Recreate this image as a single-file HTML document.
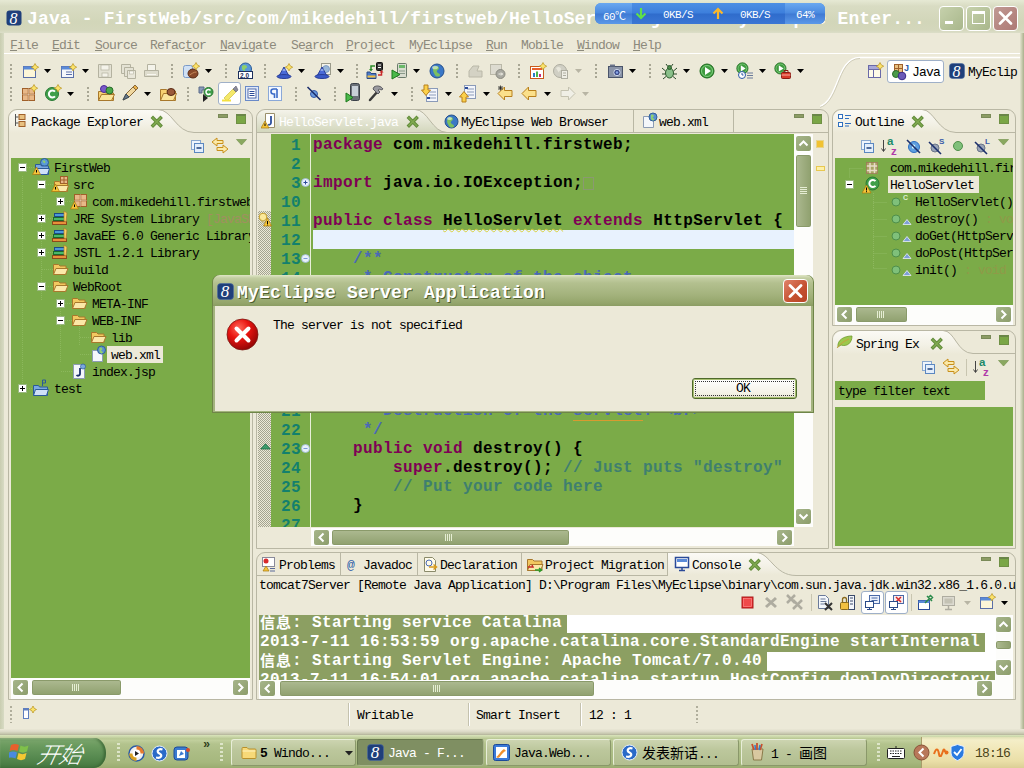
<!DOCTYPE html>
<html lang="zh">
<head>
<meta charset="utf-8">
<title>Java - FirstWeb/src/com/mikedehill/firstweb/HelloServlet.java - MyEclipse Enterprise Workbench</title>
<style>
*{box-sizing:border-box;margin:0;padding:0}
html,body{width:1024px;height:768px;overflow:hidden;background:#ece9d8}
body{position:relative;font-family:"Liberation Mono","Noto Sans CJK SC",monospace;font-size:13px;letter-spacing:-0.8px;color:#000;line-height:16px}
.a{position:absolute}
.t{position:absolute;white-space:pre;height:16px;line-height:18px}
/* title bar */
#title{left:0;top:0;width:1024px;height:33px;background:linear-gradient(#e6e9d4 0,#d9dcc3 6px,#d2d6b9 22px,#d4d7bc 30px,#dcdec8 33px)}
#title .txt{left:27px;top:7px;height:24px;line-height:24px;font-size:18px;font-weight:bold;letter-spacing:0.15px;color:#fff}
.wb{top:6px;width:25px;height:25px;border:1px solid #fff;border-radius:4px}
/* menu */
#menu{left:4px;top:33px;width:1016px;height:21px;background:#ece9d8;border-bottom:1px solid #fff}
#menu span{position:absolute;top:4px;line-height:18px;color:#8c8a7c;white-space:pre}
#menu u{text-decoration:underline}
/* panels */
.panel{border:1px solid #b9b7a4;border-radius:9px 9px 0 0;background:#ece9d8}
.green{background:#7bab48}
.sb{background:#fdfdfb}
.sbbtn{width:17px;height:17px;border:1px solid #fff;border-radius:3px;background:linear-gradient(135deg,#a6b58a,#8c9d6b)}
.thumb{border:1px solid #fff;border-radius:3px;background:linear-gradient(#adba91,#8fa06e);box-shadow:inset 0 0 0 1px #8a9a6a}
.thumbv{border:1px solid #fff;border-radius:3px;background:linear-gradient(90deg,#adba91,#8fa06e);box-shadow:inset 0 0 0 1px #8a9a6a}
.row{position:absolute;white-space:pre;height:17px;line-height:19px}
/* code */
.code{position:absolute;white-space:pre;font-size:16px;font-weight:bold;letter-spacing:0.4px;height:19px;line-height:19px}
.ln{color:#13806d;text-align:right;width:30px;left:271px;padding-top:1px}
.kw{color:#7f0055}.cm{color:#4a68b8}.lc{color:#3f7f6f}
.con{position:absolute;white-space:pre;font-size:16px;font-weight:bold;letter-spacing:0.4px;height:19px;line-height:19px;color:#fff;background:#8c9f62;left:259px;padding-left:1px;overflow:hidden}
.mn{width:10px;height:4px;background:#8c9c64;border:1px solid #7a8a58}
.mx{width:10px;height:10px;background:#7aa646;border:1px solid #6f9044;border-top:2px solid #6a8648}
.cj{font-family:"Noto Sans CJK SC",sans-serif;font-size:15px;letter-spacing:1px;display:inline-block;width:32px;height:19px;line-height:19px;vertical-align:top;overflow:hidden;position:relative;top:-2px}
.tb{top:739px;height:27px;border:1px solid #e8eed8;border-right-color:#8a986a;border-bottom-color:#8a986a;border-radius:3px;background:linear-gradient(#ccd4b0,#bcc79c 40%,#b2be90)}
.tb.on{background:#7f8f62;border-color:#6a7a50 #a8b48a #a8b48a #6a7a50}
.w{color:#fff;font-size:11px;letter-spacing:-0.6px}
</style>
</head>
<body>
<svg width="0" height="0" style="position:absolute"><defs><linearGradient id="tabg" x1="0" y1="0" x2="0" y2="1"><stop offset="0" stop-color="#fbfaf5"/><stop offset=".6" stop-color="#f3f1e6"/><stop offset="1" stop-color="#ece9d8"/></linearGradient></defs></svg>
<!-- TITLE BAR -->
<div id="title" class="a">
  <svg class="a" style="left:6px;top:10px" width="16" height="16" viewBox="0 0 16 16"><rect x="0.5" y="0.5" width="15" height="15" rx="3" fill="#1f3f7a"/><text x="3.500" y="13.500" font-family="Liberation Serif,serif" font-style="italic" font-size="16" fill="#fff" letter-spacing="0">8</text></svg>
  <div class="t txt">Java - FirstWeb/src/com/mikedehill/firstweb/HelloServlet.java - MyEclipse Enter...</div>
</div>
<!-- title widgets -->
<div class="a" style="left:595px;top:3px;width:230px;height:21px;border-radius:6px;background:linear-gradient(#4d8fe4 0,#3d7fdc 10px,#2f6ccc 11px,#3a76d4 21px);overflow:hidden">
 <div class="a" style="left:0;top:0;width:37px;height:21px;background:linear-gradient(#6aa8f0,#4a8ae0 10px,#3f7ad4 11px,#5a98e8)"></div>
 <div class="a" style="left:190px;top:0;width:40px;height:21px;background:linear-gradient(#6aa8f0,#4a8ae0 10px,#3f7ad4 11px,#5a98e8)"></div>
</div>
<div class="t w" style="left:603px;top:6px">60<span style="font-family:'Noto Sans CJK SC',sans-serif;letter-spacing:0">℃</span></div>
<svg class="a" style="left:635px;top:7px" width="12" height="13" viewBox="0 0 12 13"><path d="M6 1v9M1.500 6.500L6 11l4.500-4.500" fill="none" stroke="#5fe04a" stroke-width="2.200"/></svg>
<div class="t w" style="left:663px;top:6px">0KB/S</div>
<svg class="a" style="left:712px;top:7px" width="12" height="13" viewBox="0 0 12 13"><path d="M6 12V3M1.500 6.500L6 2l4.500 4.500" fill="none" stroke="#fbb82a" stroke-width="2.200"/></svg>
<div class="t w" style="left:740px;top:6px">0KB/S</div>
<div class="t w" style="left:796px;top:6px">64%</div>
<div class="a wb" style="left:939px;background:linear-gradient(135deg,#c6d1ac,#b4c198 60%,#a9b78c)"></div>
<div class="a" style="left:945px;top:21px;width:8px;height:3px;background:#fff"></div>
<div class="a wb" style="left:966px;background:linear-gradient(135deg,#c6d1ac,#b4c198 60%,#a9b78c)"></div>
<div class="a" style="left:972px;top:11px;width:13px;height:13px;border:1px solid #fff;border-top-width:3px"></div>
<div class="a wb" style="left:993px;background:linear-gradient(135deg,#c09a94,#b58580 60%,#ac7a76)"></div>
<svg class="a" style="left:998px;top:11px" width="15" height="14" viewBox="0 0 15 14"><path d="M2 1.500l11 11M13 1.500l-11 11" stroke="#fff" stroke-width="2.600" stroke-linecap="round"/></svg>
<!-- MENU -->
<div id="menu" class="a">
  <span style="left:6px"><u>F</u>ile</span><span style="left:48px"><u>E</u>dit</span><span style="left:91px"><u>S</u>ource</span><span style="left:146px">Refac<u>t</u>or</span><span style="left:216px"><u>N</u>avigate</span><span style="left:287px">Se<u>a</u>rch</span><span style="left:342px"><u>P</u>roject</span><span style="left:405px">MyEclipse</span><span style="left:482px"><u>R</u>un</span><span style="left:517px">Mobile</span><span style="left:573px"><u>W</u>indow</span><span style="left:629px"><u>H</u>elp</span>
</div>
<!--TOOLBAR-->
<div class="a" style="left:10px;top:64px;width:2px;height:15px;background:repeating-linear-gradient(#a8a694 0 2px,transparent 2px 4px)"></div>
<svg class="a" style="left:22px;top:63px" width="18" height="17" viewBox="0 0 18 17"><rect x="1.500" y="3.500" width="12" height="11" fill="#fdf6d8" stroke="#5a6fa8"/><rect x="1.500" y="3.500" width="12" height="3" fill="#5a8ad8"/><path d="M13 0.5l1.300 2.400 2.400 1.300-2.400 1.300L13 7.9l-1.300-2.400-2.400-1.300 2.400-1.300z" fill="#fbe36a" stroke="#b8901c" stroke-width=".7"/></svg>
<svg class="a" style="left:44px;top:69px" width="7" height="4" viewBox="0 0 7 4"><path d="M0 0h7L3.500 4z" fill="#000"/></svg>
<svg class="a" style="left:60px;top:63px" width="18" height="17" viewBox="0 0 18 17"><rect x="1.500" y="3.500" width="12" height="11" fill="#f4f6fb" stroke="#5a6fa8"/><rect x="1.500" y="3.500" width="12" height="3" fill="#5a8ad8"/><path d="M6 9h6M6 11.500h6" stroke="#5a6fa8"/><path d="M13 0.5l1.300 2.400 2.400 1.300-2.400 1.300L13 7.9l-1.300-2.400-2.400-1.300 2.400-1.300z" fill="#fbe36a" stroke="#b8901c" stroke-width=".7"/></svg>
<svg class="a" style="left:82px;top:69px" width="7" height="4" viewBox="0 0 7 4"><path d="M0 0h7L3.500 4z" fill="#000"/></svg>
<svg class="a" style="left:97px;top:63px" width="16" height="16" viewBox="0 0 16 16"><path d="M1.500 1.500h13v13h-13z" fill="#e4e2d4" stroke="#b4b2a0"/><rect x="4" y="2" width="8" height="5" fill="#f4f3ea" stroke="#b4b2a0" stroke-width=".7"/><rect x="5" y="10" width="6" height="4" fill="#f4f3ea" stroke="#b4b2a0" stroke-width=".7"/></svg>
<svg class="a" style="left:120px;top:63px" width="17" height="17" viewBox="0 0 17 17"><path d="M1.500 1.500h9v9h-9z" fill="#e4e2d4" stroke="#b4b2a0"/><path d="M4.500 4.500h9v9h-9z" fill="#e4e2d4" stroke="#b4b2a0"/><path d="M7.500 7.500h8v8h-8z" fill="#e9e7da" stroke="#b4b2a0"/><rect x="9.500" y="8" width="4" height="3" fill="#f8f7f0" stroke="#b4b2a0" stroke-width=".6"/></svg>
<svg class="a" style="left:143px;top:63px" width="17" height="16" viewBox="0 0 17 16"><path d="M4.500 1.500h8v6h-8z" fill="#f4f3ea" stroke="#b4b2a0"/><path d="M1.500 7.500h14v6h-14z" fill="#dedccd" stroke="#b4b2a0"/><path d="M4 11.500h9" stroke="#f8f7f0"/></svg>
<div class="a" style="left:171px;top:64px;width:2px;height:15px;background:repeating-linear-gradient(#a8a694 0 2px,transparent 2px 4px)"></div>
<svg class="a" style="left:182px;top:62px" width="19" height="18" viewBox="0 0 19 18"><rect x="1.500" y="3.500" width="9" height="12" rx="2" fill="#cfe0f4" stroke="#7a9ac8"/><ellipse cx="11" cy="11.500" rx="5" ry="4.500" fill="#8a4a2a" stroke="#5a2a14"/><path d="M7.500 13c2-1 4-3 7-3" stroke="#c88a5a" fill="none"/><path d="M14 0.5l1.300 2.400 2.400 1.300-2.400 1.300L14 7.9l-1.300-2.400-2.400-1.300 2.400-1.300z" fill="#fbe36a" stroke="#b8901c" stroke-width=".7"/></svg>
<svg class="a" style="left:205px;top:69px" width="7" height="4" viewBox="0 0 7 4"><path d="M0 0h7L3.500 4z" fill="#000"/></svg>
<div class="a" style="left:225px;top:64px;width:2px;height:15px;background:repeating-linear-gradient(#a8a694 0 2px,transparent 2px 4px)"></div>
<svg class="a" style="left:237px;top:62px" width="17" height="18" viewBox="0 0 17 18"><circle cx="8.500" cy="7" r="6" fill="#5a9ad8" stroke="#2a5a98"/><path d="M5 4c2-2 5-1 5 1s-3 1-2 3-2 1-3-1z" fill="#8fd06a"/><rect x="1.500" y="9.500" width="14" height="7" fill="#fff" stroke="#1c2f5c"/><text x="3" y="15.500" font-family="Liberation Sans,sans-serif" font-size="6.500" font-weight="bold" fill="#1c2f5c" letter-spacing="0">2.0</text></svg>
<div class="a" style="left:264px;top:64px;width:2px;height:15px;background:repeating-linear-gradient(#a8a694 0 2px,transparent 2px 4px)"></div>
<svg class="a" style="left:276px;top:63px" width="18" height="17" viewBox="0 0 18 17"><path d="M8 4l5 9H3z" fill="#4a6ad8" stroke="#2a3f98"/><ellipse cx="8" cy="13.500" rx="7" ry="2" fill="#3a5ac8" stroke="#2a3f98"/><path d="M6.500 7h3" stroke="#cfe0ff"/><path d="M13 0.5l1.300 2.400 2.400 1.300-2.400 1.300L13 7.9l-1.300-2.400-2.400-1.300 2.400-1.300z" fill="#fbe36a" stroke="#b8901c" stroke-width=".7"/></svg>
<svg class="a" style="left:298px;top:69px" width="7" height="4" viewBox="0 0 7 4"><path d="M0 0h7L3.500 4z" fill="#000"/></svg>
<svg class="a" style="left:314px;top:63px" width="18" height="17" viewBox="0 0 18 17"><rect x="7.500" y="0.500" width="9" height="11" fill="#f4f3ea" stroke="#9a9a8a"/><circle cx="12" cy="6" r="3.500" fill="#9ab8d8" stroke="#6a8ab8" stroke-width=".7"/><path d="M8 4l5 9H3z" fill="#4a6ad8" stroke="#2a3f98"/><ellipse cx="8" cy="13.500" rx="7" ry="2" fill="#3a5ac8" stroke="#2a3f98"/><path d="M6.500 7h3" stroke="#cfe0ff"/></svg>
<svg class="a" style="left:337px;top:69px" width="7" height="4" viewBox="0 0 7 4"><path d="M0 0h7L3.500 4z" fill="#000"/></svg>
<div class="a" style="left:356px;top:64px;width:2px;height:15px;background:repeating-linear-gradient(#a8a694 0 2px,transparent 2px 4px)"></div>
<svg class="a" style="left:366px;top:62px" width="18" height="18" viewBox="0 0 18 18"><rect x="10.500" y="0.500" width="6" height="8" rx="1" fill="#333" stroke="#111"/><path d="M12 3h3M12 5.500h3" stroke="#fff"/><path d="M1 10h3l1 1.500h5v5H1z" fill="#4a7ac8" stroke="#2a4a88"/><path d="M1.500 14.500h8" stroke="#f0c040" stroke-width="2"/><path d="M9 4H5v4" fill="none" stroke="#2a8a2a" stroke-width="1.500"/><path d="M3 7l2 2.500L7 7z" fill="#2a8a2a"/><path d="M12 13h3.500V10" fill="none" stroke="#c82a2a" stroke-width="1.500"/><path d="M13.500 10.500l2-2.500 2 2.500z" fill="#c82a2a"/></svg>
<svg class="a" style="left:391px;top:63px" width="17" height="17" viewBox="0 0 17 17"><rect x="6.500" y="0.500" width="9" height="14" rx="1" fill="#d8dccf" stroke="#6a7a6a"/><rect x="8" y="2" width="6" height="3" fill="#6ab86a"/><path d="M8 8h6M8 10.500h6" stroke="#8a9a8a"/><path d="M1 7l8 4.500L1 16z" fill="#4ab84a" stroke="#1c7a1c"/></svg>
<svg class="a" style="left:413px;top:69px" width="7" height="4" viewBox="0 0 7 4"><path d="M0 0h7L3.500 4z" fill="#000"/></svg>
<svg class="a" style="left:429px;top:63px" width="16" height="16" viewBox="0 0 16 16"><circle cx="8" cy="8" r="7" fill="#3a78c8" stroke="#24508c"/><path d="M4 4c2-2 6-1 6 1s-3 2-2 4 3 1 3 3-4 2-5 0-2-3-2-5z" fill="#7cc060"/><ellipse cx="6" cy="4.500" rx="3" ry="1.800" fill="#fff" opacity=".5"/></svg>
<div class="a" style="left:456px;top:64px;width:2px;height:15px;background:repeating-linear-gradient(#a8a694 0 2px,transparent 2px 4px)"></div>
<svg class="a" style="left:467px;top:63px" width="17" height="16" viewBox="0 0 17 16"><path d="M2 8l4-5h6l-2 5h5v6H2z" fill="#d4d2c4" stroke="#bab8a8"/></svg>
<svg class="a" style="left:489px;top:63px" width="18" height="17" viewBox="0 0 18 17"><rect x="1.500" y="1.500" width="11" height="10" fill="#dddbd0" stroke="#bab8a8"/><circle cx="11.500" cy="11" r="4.500" fill="#a8a8a0" stroke="#8a8a80"/><path d="M9.500 11h4M12 9.500l1.500 1.500-1.500 1.500" stroke="#f4f3ea" fill="none"/></svg>
<div class="a" style="left:518px;top:64px;width:2px;height:15px;background:repeating-linear-gradient(#a8a694 0 2px,transparent 2px 4px)"></div>
<svg class="a" style="left:529px;top:62px" width="19" height="18" viewBox="0 0 19 18"><rect x="1.500" y="4.500" width="13" height="12" fill="#fff" stroke="#c85a1c"/><rect x="3" y="6" width="10" height="2" fill="#e8602c"/><rect x="4" y="11" width="2" height="4" fill="#2a7ac8"/><rect x="7" y="9.500" width="2" height="5.500" fill="#4ab84a"/><rect x="10" y="12" width="2" height="3" fill="#c82a7a"/><path d="M14 0.5l1.300 2.400 2.400 1.300-2.400 1.300L14 7.9l-1.300-2.400-2.400-1.300 2.400-1.300z" fill="#fbe36a" stroke="#b8901c" stroke-width=".7"/></svg>
<svg class="a" style="left:552px;top:63px" width="18" height="17" viewBox="0 0 18 17"><circle cx="8" cy="8" r="6.500" fill="#d0cfc4" stroke="#aeada0"/><path d="M4 5c2-2 5-1 5 1s-3 2-2 4z" fill="#e8e7dc"/><rect x="9.500" y="7.500" width="6" height="8" fill="#eeede4" stroke="#aeada0"/><path d="M11 10h3M11 12.500h3" stroke="#aeada0"/></svg>
<svg class="a" style="left:575px;top:69px" width="7" height="4" viewBox="0 0 7 4"><path d="M0 0h7L3.500 4z" fill="#b8b5a4"/></svg>
<div class="a" style="left:595px;top:64px;width:2px;height:15px;background:repeating-linear-gradient(#a8a694 0 2px,transparent 2px 4px)"></div>
<svg class="a" style="left:607px;top:63px" width="17" height="16" viewBox="0 0 17 16"><rect x="1.500" y="3.500" width="14" height="11" fill="#8a94a8" stroke="#4a546a"/><rect x="3" y="1.500" width="5" height="2" fill="#6a748a"/><circle cx="10" cy="9.500" r="3.200" fill="#3a4a8a" stroke="#cfd8ea"/><circle cx="10" cy="9.500" r="1.200" fill="#8aa8e8"/></svg>
<svg class="a" style="left:629px;top:69px" width="7" height="4" viewBox="0 0 7 4"><path d="M0 0h7L3.500 4z" fill="#000"/></svg>
<div class="a" style="left:649px;top:64px;width:2px;height:15px;background:repeating-linear-gradient(#a8a694 0 2px,transparent 2px 4px)"></div>
<svg class="a" style="left:661px;top:63px" width="17" height="17" viewBox="0 0 17 17"><ellipse cx="8.500" cy="10" rx="4" ry="5" fill="#8ac08a" stroke="#2a5a2a"/><circle cx="8.500" cy="4.500" r="2" fill="#4a8a4a" stroke="#2a5a2a"/><path d="M4.500 8L1 5M4.500 11H1M5 13.500l-3 2.500M12.500 8L16 5M12.500 11H16M12 13.500l3 2.500M6.500 3L5 1M10.500 3L12 1" stroke="#2a4a2a" fill="none"/></svg>
<svg class="a" style="left:683px;top:69px" width="7" height="4" viewBox="0 0 7 4"><path d="M0 0h7L3.500 4z" fill="#000"/></svg>
<svg class="a" style="left:699px;top:63px" width="16" height="16" viewBox="0 0 16 16"><circle cx="8" cy="8" r="7" fill="#3f9a3f" stroke="#1c6a1c"/><circle cx="8" cy="8" r="5.500" fill="none" stroke="#7fd07f" stroke-width="1"/><path d="M6 4l6 4-6 4z" fill="#fff"/></svg>
<svg class="a" style="left:721px;top:69px" width="7" height="4" viewBox="0 0 7 4"><path d="M0 0h7L3.500 4z" fill="#000"/></svg>
<svg class="a" style="left:736px;top:62px" width="18" height="18" viewBox="0 0 18 18"><g transform="scale(.8)"><circle cx="8" cy="8" r="7" fill="#3f9a3f" stroke="#1c6a1c"/><circle cx="8" cy="8" r="5.500" fill="none" stroke="#7fd07f" stroke-width="1"/><path d="M6 4l6 4-6 4z" fill="#fff"/></g><circle cx="6" cy="13" r="3.500" fill="#fff" stroke="#2a5aa8"/><path d="M6 11v2h1.500" stroke="#2a5aa8" fill="none"/><path d="M11 11h6M11 13.500h6M11 16h6" stroke="#6a7a9a"/></svg>
<svg class="a" style="left:759px;top:69px" width="7" height="4" viewBox="0 0 7 4"><path d="M0 0h7L3.500 4z" fill="#000"/></svg>
<svg class="a" style="left:774px;top:62px" width="18" height="18" viewBox="0 0 18 18"><g transform="scale(.8)"><circle cx="8" cy="8" r="7" fill="#3f9a3f" stroke="#1c6a1c"/><circle cx="8" cy="8" r="5.500" fill="none" stroke="#7fd07f" stroke-width="1"/><path d="M6 4l6 4-6 4z" fill="#fff"/></g><rect x="7.500" y="10.500" width="9" height="6" rx="1" fill="#d83a2a" stroke="#8a1c14"/><path d="M10 10.500v-2h4v2" fill="none" stroke="#8a1c14"/><path d="M7.500 13h9" stroke="#f8b0a0"/></svg>
<svg class="a" style="left:797px;top:69px" width="7" height="4" viewBox="0 0 7 4"><path d="M0 0h7L3.500 4z" fill="#000"/></svg>
<svg class="a" style="left:820px;top:55px" width="200" height="54" viewBox="0 0 200 54"><path d="M-6 52.500c26 0 20-50 46-50H200" fill="none" stroke="#fff" stroke-width="1.500"/><path d="M-6 53.500c27 0 21-50 46-50" fill="none" stroke="#cfccb8" stroke-width="1"/></svg>
<svg class="a" style="left:867px;top:62px" width="17" height="17" viewBox="0 0 17 17"><rect x="1.500" y="3.500" width="12" height="12" fill="#fffbe8" stroke="#6a6aa8"/><path d="M1.500 7.500h12M6.500 7.500v8" stroke="#6a6aa8"/><rect x="2" y="4" width="11" height="3" fill="#a8a8d8"/><path d="M13 0.5l1.300 2.400 2.400 1.300-2.400 1.300L13 7.9l-1.300-2.400-2.400-1.300 2.400-1.300z" fill="#fbe36a" stroke="#b8901c" stroke-width=".7"/></svg>
<div class="a" style="left:887px;top:60px;width:57px;height:23px;border:1px solid #9fb0c8;border-radius:3px;background:#fff"></div>
<svg class="a" style="left:891px;top:63px" width="19" height="18" viewBox="0 0 19 18"><rect x="3.500" y="1.500" width="8" height="8" fill="#e8c080" stroke="#a0602a"/><path d="M3.500 5.500h8M7.500 1.500v8" stroke="#a0602a"/><circle cx="5" cy="11" r="3.500" fill="#4a9a4a" stroke="#2a6a2a"/><circle cx="11" cy="13" r="3.800" fill="#6a5ab8" stroke="#3a2a88"/><text x="13" y="8" font-family="Liberation Sans,sans-serif" font-size="9" font-weight="bold" fill="#2a5aa8" letter-spacing="0">J</text></svg>
<div class="t" style="left:912px;top:64px">Java</div>
<svg class="a" style="left:949px;top:63px" width="16" height="16" viewBox="0 0 16 16"><rect x="0.500" y="0.500" width="15" height="15" rx="3" fill="#1f3f7a" stroke="#4a6aa0" stroke-width=".6"/><text x="3.500" y="13.500" font-family="Liberation Serif,serif" font-style="italic" font-size="16" fill="#fff" letter-spacing="0">8</text></svg>
<div class="t" style="left:968px;top:64px">MyEclip</div>
<div class="a" style="left:10px;top:87px;width:2px;height:15px;background:repeating-linear-gradient(#a8a694 0 2px,transparent 2px 4px)"></div>
<svg class="a" style="left:21px;top:84px" width="18" height="18" viewBox="0 0 18 18"><rect x="1.500" y="4.500" width="12" height="12" fill="#e8b888" stroke="#a0602a"/><path d="M1.500 10.500h12M7.500 4.500v12" stroke="#a0602a" stroke-width="1.500"/><path d="M1.500 10.500h12M7.500 4.500v12" stroke="#f4e0c8" stroke-width=".5"/><path d="M13 0.5l1.300 2.400 2.400 1.300-2.400 1.300L13 7.9l-1.300-2.400-2.400-1.300 2.400-1.300z" fill="#fbe36a" stroke="#b8901c" stroke-width=".7"/></svg>
<svg class="a" style="left:44px;top:84px" width="18" height="18" viewBox="0 0 18 18"><circle cx="8" cy="10" r="6.500" fill="#3f9f4a" stroke="#2a7a34"/><path d="M11 7.700a3.500 3.500 0 1 0 0 4.600" fill="none" stroke="#fff" stroke-width="2"/><path d="M14 0.5l1.300 2.400 2.400 1.300-2.400 1.300L14 7.9l-1.300-2.400-2.400-1.300 2.400-1.300z" fill="#fbe36a" stroke="#b8901c" stroke-width=".7"/></svg>
<svg class="a" style="left:67px;top:92px" width="7" height="4" viewBox="0 0 7 4"><path d="M0 0h7L3.500 4z" fill="#000"/></svg>
<div class="a" style="left:87px;top:87px;width:2px;height:15px;background:repeating-linear-gradient(#a8a694 0 2px,transparent 2px 4px)"></div>
<svg class="a" style="left:97px;top:84px" width="18" height="18" viewBox="0 0 18 18"><path d="M1.500 7.500h6l1 1.500h8v7.500h-15z" fill="#f7d070" stroke="#a8782c"/><path d="M1.500 16.500l3-6h13l-3 6z" fill="#fbe49a" stroke="#a8782c"/><circle cx="7" cy="5" r="3.500" fill="#7a5ac8" stroke="#4a2a98"/><circle cx="12.500" cy="6.500" r="3.500" fill="#4aa84a" stroke="#2a6a2a"/></svg>
<svg class="a" style="left:121px;top:84px" width="18" height="18" viewBox="0 0 18 18"><path d="M2 16l3-6 7-7 3 3-7 7z" fill="#f0d8a0" stroke="#8a6a3a"/><path d="M12 3l2-2 3 3-2 2z" fill="#e8b04a" stroke="#8a6a3a"/><path d="M2 16l3-6 3 3z" fill="#6a7a8a" stroke="#3a4a5a"/></svg>
<svg class="a" style="left:144px;top:92px" width="7" height="4" viewBox="0 0 7 4"><path d="M0 0h7L3.500 4z" fill="#000"/></svg>
<svg class="a" style="left:159px;top:85px" width="18" height="17" viewBox="0 0 18 17"><path d="M1.500 4.500h6l1 1.500h8v9.500h-15z" fill="#f7d070" stroke="#a8782c"/><path d="M1.500 15.500l3-7h13l-3 7z" fill="#fbe49a" stroke="#a8782c"/><ellipse cx="12" cy="7" rx="4" ry="3.500" fill="#9a5a3a" stroke="#5a2a14"/></svg>
<div class="a" style="left:187px;top:87px;width:2px;height:15px;background:repeating-linear-gradient(#a8a694 0 2px,transparent 2px 4px)"></div>
<svg class="a" style="left:197px;top:85px" width="18" height="17" viewBox="0 0 18 17"><path d="M2 2h5v3H5v3H2z" fill="#8a9ab8" stroke="#5a6a8a"/><circle cx="11.500" cy="7" r="4.500" fill="#3f9f4a" stroke="#2a7a34"/><path d="M13.500 5.500a2.500 2.500 0 1 0 0 3" fill="none" stroke="#fff" stroke-width="1.500"/><path d="M6 9l5 4-5 4z" fill="#222"/></svg>
<div class="a" style="left:218px;top:82px;width:23px;height:23px;border:1px solid #9fb0c8;border-radius:3px;background:#fff"></div>
<svg class="a" style="left:221px;top:85px" width="18" height="17" viewBox="0 0 18 17"><path d="M3 13l9-9 3 3-9 9z" fill="#f4e86a" stroke="#c8b82a" stroke-width=".6"/><path d="M12 4l3-3 2 4-2 2z" fill="#8a8a9a" stroke="#5a5a6a" stroke-width=".6"/><path d="M1 15.500h9" stroke="#f4e040" stroke-width="2"/></svg>
<svg class="a" style="left:244px;top:85px" width="16" height="17" viewBox="0 0 16 17"><rect x="1.500" y="1.500" width="13" height="14" fill="#dfe8f8" stroke="#6a8ac8"/><rect x="4" y="4" width="8" height="9" fill="#fff" stroke="#2a4a98" stroke-width=".8"/><path d="M5.500 6.500h5M5.500 8.500h5M5.500 10.500h5" stroke="#2a4a98"/></svg>
<svg class="a" style="left:267px;top:85px" width="16" height="17" viewBox="0 0 16 17"><rect x="1.500" y="1.500" width="13" height="14" fill="#f4f8ff" stroke="#8aa8d8"/><path d="M10 4H6.500a2.500 2.500 0 0 0 0 5H7.500v4M10 4v9" fill="none" stroke="#3a6ac8" stroke-width="1.600"/></svg>
<div class="a" style="left:295px;top:87px;width:2px;height:15px;background:repeating-linear-gradient(#a8a694 0 2px,transparent 2px 4px)"></div>
<svg class="a" style="left:306px;top:85px" width="17" height="17" viewBox="0 0 17 17"><circle cx="8" cy="9" r="3.500" fill="#6a9ae0" stroke="#3a5aa8"/><path d="M1.500 2l13 13" stroke="#1c2f6c" stroke-width="1.600"/></svg>
<div class="a" style="left:334px;top:87px;width:2px;height:15px;background:repeating-linear-gradient(#a8a694 0 2px,transparent 2px 4px)"></div>
<svg class="a" style="left:345px;top:83px" width="16" height="20" viewBox="0 0 16 20"><rect x="5.500" y="0.500" width="9" height="17" rx="2" fill="#6a7078" stroke="#3a4048"/><rect x="7" y="3" width="6" height="10" fill="#c8d0d8"/><path d="M1 10l7 4.500L1 19z" fill="#4ab84a" stroke="#1c7a1c"/></svg>
<svg class="a" style="left:367px;top:84px" width="19" height="18" viewBox="0 0 19 18"><path d="M3 16l8-9" stroke="#3a3a3a" stroke-width="2.500" stroke-linecap="round"/><path d="M7 3c3-2 7-1 9 2l-2 1c-1-1-2-1-3 0l2 2-2 2-5-5z" fill="#9a9aa0" stroke="#5a5a60"/></svg>
<svg class="a" style="left:391px;top:92px" width="7" height="4" viewBox="0 0 7 4"><path d="M0 0h7L3.500 4z" fill="#000"/></svg>
<div class="a" style="left:411px;top:87px;width:2px;height:15px;background:repeating-linear-gradient(#a8a694 0 2px,transparent 2px 4px)"></div>
<svg class="a" style="left:421px;top:84px" width="18" height="19" viewBox="0 0 18 19"><rect x="5.500" y="4.500" width="11" height="13" fill="#f4f6fb" stroke="#8a9ab8"/><path d="M8 8h7M8 11h7M8 14h7" stroke="#8a9ab8"/><rect x="6" y="13" width="3" height="2" fill="#2a4a98"/><path d="M3 1h4v5h2.500L5 11.500 .5 6H3z" fill="#fbd04a" stroke="#b8801c"/></svg>
<svg class="a" style="left:445px;top:92px" width="7" height="4" viewBox="0 0 7 4"><path d="M0 0h7L3.500 4z" fill="#000"/></svg>
<svg class="a" style="left:459px;top:84px" width="18" height="19" viewBox="0 0 18 19"><rect x="5.500" y="1.500" width="11" height="13" fill="#f4f6fb" stroke="#8a9ab8"/><path d="M8 5h7M8 8h7M8 11h7" stroke="#8a9ab8"/><rect x="6" y="3" width="3" height="2" fill="#2a4a98"/><path d="M3 18h4v-5h2.500L5 7.500 .5 13H3z" fill="#fbd04a" stroke="#b8801c"/></svg>
<svg class="a" style="left:483px;top:92px" width="7" height="4" viewBox="0 0 7 4"><path d="M0 0h7L3.500 4z" fill="#000"/></svg>
<svg class="a" style="left:497px;top:85px" width="17" height="17" viewBox="0 0 17 17"><path d="M1 8.500L7.500 2v3.500H15v6H7.500V15z" fill="#fbe08a" stroke="#b8801c"/><path d="M1 3h5M3.500 .5v5M1.500 1l4 4M5.500 1l-4 4" stroke="#222" stroke-width=".8"/></svg>
<svg class="a" style="left:521px;top:85px" width="17" height="17" viewBox="0 0 17 17"><path d="M1 8.500L7.500 2v3.500H15v6H7.500V15z" fill="#fbe08a" stroke="#b8801c"/></svg>
<svg class="a" style="left:544px;top:92px" width="7" height="4" viewBox="0 0 7 4"><path d="M0 0h7L3.500 4z" fill="#000"/></svg>
<svg class="a" style="left:559px;top:85px" width="17" height="17" viewBox="0 0 17 17"><path d="M16 8.500L9.500 2v3.500H2v6h7.500V15z" fill="#f0efe6" stroke="#c4c2b0"/></svg>
<svg class="a" style="left:582px;top:92px" width="7" height="4" viewBox="0 0 7 4"><path d="M0 0h7L3.500 4z" fill="#b8b5a4"/></svg>
<!--/TOOLBAR-->
<!--PANELS-->
<!-- window borders -->
<div class="a" style="left:0;top:33px;width:4px;height:702px;background:linear-gradient(90deg,#c9cdb0,#d8dbc4)"></div>
<div class="a" style="left:1020px;top:33px;width:4px;height:702px;background:linear-gradient(90deg,#e4e3d0,#cdd0b4 40%,#a9af8c)"></div>
<div class="a" style="left:0;top:729px;width:1024px;height:6px;background:linear-gradient(#eae7d6,#dddbc8 40%,#c8c8b0 75%,#b2b399)"></div>

<!-- PACKAGE EXPLORER -->
<div class="a panel" style="left:8px;top:109px;width:245px;height:591px"></div>
<div class="a green" style="left:11px;top:158px;width:239px;height:520px"></div>
<div class="a sb" style="left:11px;top:678px;width:239px;height:21px"></div>
<div class="a sbbtn" style="left:12px;top:679px"></div>
<div class="a thumb" style="left:31px;top:679px;width:91px;height:17px"></div>
<div class="a sbbtn" style="left:232px;top:679px"></div>
<div id="tree" class="a" style="left:11px;top:158px;width:239px;height:520px;overflow:hidden"><div class="a" style="left:-11px;top:-158px">
<svg class="a" style="left:11px;top:158px" width="120" height="240" viewBox="0 0 120 240"><path d="M11.500 18v212M30.500 35v108M49.500 147v58M68.500 164v24" stroke="#8cb85c" fill="none" stroke-dasharray="1 1"/><path d="M16 9.500h8M35 26.500h8M54 43.500h8M35 60.500h8M35 77.500h8M35 94.500h8M31 111.500h12M35 128.500h8M54 145.500h8M54 162.500h8M69 179.500h12M69 196.500h12M50 213.500h12M16 230.500h8" stroke="#8cb85c" fill="none" stroke-dasharray="1 1"/></svg>
<svg class="a" style="left:18px;top:163px" width="9" height="9" viewBox="0 0 9 9"><rect x="0.500" y="0.500" width="8" height="8" fill="#fff" stroke="#9ab880"/><path d="M2 4.500h5" stroke="#000"/></svg>
<svg class="a" style="left:32px;top:158px" width="18" height="18" viewBox="0 0 18 18"><circle cx="12.500" cy="4.500" r="4" fill="#5a9ad8" stroke="#2a5a98"/><path d="M10.500 3c1-1 3 0 3 1s-2 1-1 2z" fill="#8fd06a"/><path d="M3.500 6.500h5l1 1.500h7v8.500h-13z" fill="#7aa8e0" stroke="#2a5a98"/><path d="M3.500 16.500l2-6h12l-2 6z" fill="#cfe0f8" stroke="#2a5a98"/><path d="M4.5 9l4 7.500h-8z" fill="#f5c43a" stroke="#a8780c" stroke-width=".7"/><path d="M4.5 12v2.500" stroke="#000" stroke-width="1"/></svg>
<svg class="a" style="left:37px;top:180px" width="9" height="9" viewBox="0 0 9 9"><rect x="0.500" y="0.500" width="8" height="8" fill="#fff" stroke="#9ab880"/><path d="M2 4.500h5" stroke="#000"/></svg>
<svg class="a" style="left:51px;top:175px" width="18" height="18" viewBox="0 0 18 18"><path d="M3.500 6.500h5l1 1.500h7v8.500h-13z" fill="#f2c860" stroke="#a8782c"/><path d="M3.500 16.500l2-6h12l-2 6z" fill="#fbe8a8" stroke="#a8782c"/><rect x="9.500" y="1.500" width="7" height="7" fill="#e8b888" stroke="#a0602a"/><path d="M9.500 5h7M13 1.500v7" stroke="#a0602a"/><path d="M4.5 9l4 7.500h-8z" fill="#f5c43a" stroke="#a8780c" stroke-width=".7"/><path d="M4.5 12v2.500" stroke="#000" stroke-width="1"/></svg>
<svg class="a" style="left:56px;top:197px" width="9" height="9" viewBox="0 0 9 9"><rect x="0.500" y="0.500" width="8" height="8" fill="#fff" stroke="#9ab880"/><path d="M2 4.500h5" stroke="#000"/><path d="M4.500 2v5" stroke="#000"/></svg>
<svg class="a" style="left:70px;top:193px" width="18" height="17" viewBox="0 0 18 17"><rect x="4.500" y="1.500" width="12" height="12" fill="#e8b888" stroke="#a0602a"/><path d="M4.500 7.500h12M10.500 1.500v12" stroke="#a0602a" stroke-width="1.500"/><path d="M4.500 7.500h12M10.500 1.500v12" stroke="#f4e0c8" stroke-width=".5"/><path d="M4.5 8.5l4 7.500h-8z" fill="#f5c43a" stroke="#a8780c" stroke-width=".7"/><path d="M4.5 11.5v2.500" stroke="#000" stroke-width="1"/></svg>
<svg class="a" style="left:37px;top:214px" width="9" height="9" viewBox="0 0 9 9"><rect x="0.500" y="0.500" width="8" height="8" fill="#fff" stroke="#9ab880"/><path d="M2 4.500h5" stroke="#000"/><path d="M4.500 2v5" stroke="#000"/></svg>
<svg class="a" style="left:52px;top:210px" width="17" height="17" viewBox="0 0 17 17"><rect x="2.500" y="3.500" width="11" height="3" fill="#4a9ad8" stroke="#1c4a88"/><rect x="1.500" y="7.500" width="12" height="3" fill="#4ab86a" stroke="#1c6a2a"/><rect x="0.500" y="11.500" width="14" height="3" fill="#e8903a" stroke="#8a4a1c"/><path d="M12 1l3 2-1 9-2-1z" fill="#f7d060" stroke="#a8782c" stroke-width=".7"/></svg>
<svg class="a" style="left:37px;top:231px" width="9" height="9" viewBox="0 0 9 9"><rect x="0.500" y="0.500" width="8" height="8" fill="#fff" stroke="#9ab880"/><path d="M2 4.500h5" stroke="#000"/><path d="M4.500 2v5" stroke="#000"/></svg>
<svg class="a" style="left:52px;top:227px" width="17" height="17" viewBox="0 0 17 17"><rect x="2.500" y="3.500" width="11" height="3" fill="#4a9ad8" stroke="#1c4a88"/><rect x="1.500" y="7.500" width="12" height="3" fill="#4ab86a" stroke="#1c6a2a"/><rect x="0.500" y="11.500" width="14" height="3" fill="#e8903a" stroke="#8a4a1c"/><path d="M12 1l3 2-1 9-2-1z" fill="#f7d060" stroke="#a8782c" stroke-width=".7"/></svg>
<svg class="a" style="left:37px;top:248px" width="9" height="9" viewBox="0 0 9 9"><rect x="0.500" y="0.500" width="8" height="8" fill="#fff" stroke="#9ab880"/><path d="M2 4.500h5" stroke="#000"/><path d="M4.500 2v5" stroke="#000"/></svg>
<svg class="a" style="left:52px;top:244px" width="17" height="17" viewBox="0 0 17 17"><rect x="2.500" y="3.500" width="11" height="3" fill="#4a9ad8" stroke="#1c4a88"/><rect x="1.500" y="7.500" width="12" height="3" fill="#4ab86a" stroke="#1c6a2a"/><rect x="0.500" y="11.500" width="14" height="3" fill="#e8903a" stroke="#8a4a1c"/><path d="M12 1l3 2-1 9-2-1z" fill="#f7d060" stroke="#a8782c" stroke-width=".7"/></svg>
<svg class="a" style="left:52px;top:261px" width="17" height="17" viewBox="0 0 17 17"><path d="M1.500 3.500h5l1.500 1.500h6v8.500h-12.500z" fill="#f2c860" stroke="#a8782c"/><path d="M1.500 13.500l2.500-6h12l-2.500 6z" fill="#fbe8a8" stroke="#a8782c"/></svg>
<svg class="a" style="left:37px;top:282px" width="9" height="9" viewBox="0 0 9 9"><rect x="0.500" y="0.500" width="8" height="8" fill="#fff" stroke="#9ab880"/><path d="M2 4.500h5" stroke="#000"/></svg>
<svg class="a" style="left:52px;top:278px" width="17" height="17" viewBox="0 0 17 17"><path d="M1.500 3.500h5l1.500 1.500h6v8.500h-12.500z" fill="#f2c860" stroke="#a8782c"/><path d="M1.500 13.500l2.500-6h12l-2.500 6z" fill="#fbe8a8" stroke="#a8782c"/></svg>
<svg class="a" style="left:56px;top:299px" width="9" height="9" viewBox="0 0 9 9"><rect x="0.500" y="0.500" width="8" height="8" fill="#fff" stroke="#9ab880"/><path d="M2 4.500h5" stroke="#000"/><path d="M4.500 2v5" stroke="#000"/></svg>
<svg class="a" style="left:71px;top:295px" width="17" height="17" viewBox="0 0 17 17"><path d="M1.500 3.500h5l1.500 1.500h6v8.500h-12.500z" fill="#f2c860" stroke="#a8782c"/><path d="M1.500 13.500l2.500-6h12l-2.500 6z" fill="#fbe8a8" stroke="#a8782c"/></svg>
<svg class="a" style="left:56px;top:316px" width="9" height="9" viewBox="0 0 9 9"><rect x="0.500" y="0.500" width="8" height="8" fill="#fff" stroke="#9ab880"/><path d="M2 4.500h5" stroke="#000"/></svg>
<svg class="a" style="left:71px;top:312px" width="17" height="17" viewBox="0 0 17 17"><path d="M1.500 3.500h5l1.500 1.500h6v8.500h-12.500z" fill="#f2c860" stroke="#a8782c"/><path d="M1.500 13.500l2.500-6h12l-2.500 6z" fill="#fbe8a8" stroke="#a8782c"/></svg>
<svg class="a" style="left:90px;top:329px" width="17" height="17" viewBox="0 0 17 17"><path d="M1.500 3.500h5l1.500 1.500h6v8.500h-12.500z" fill="#f2c860" stroke="#a8782c"/><path d="M1.500 13.500l2.500-6h12l-2.500 6z" fill="#fbe8a8" stroke="#a8782c"/></svg>
<svg class="a" style="left:90px;top:345px" width="17" height="18" viewBox="0 0 17 18"><path d="M2.500 5.500h7l3 3v8h-10z" fill="#f4f7fb" stroke="#8c9cb4"/><circle cx="11.500" cy="5" r="4" fill="#5b8fcf" stroke="#2f5f9c"/><path d="M9.500 3c1-1 3 0 3 1s-2 1-1 2 2 1 1 2-3 0-3-2z" fill="#8fd070"/></svg>
<svg class="a" style="left:71px;top:363px" width="17" height="17" viewBox="0 0 17 17"><path d="M2.500 1.500h8l3 3v11h-11z" fill="#f4f7fb" stroke="#8c9cb4"/><path d="M9 5v6a2 2 0 0 1-3.500 1" fill="none" stroke="#1c2f6c" stroke-width="1.800"/><circle cx="12" cy="3.500" r="2.500" fill="#7aa8e0" stroke="#2a5a98" stroke-width=".7"/></svg>
<svg class="a" style="left:18px;top:384px" width="9" height="9" viewBox="0 0 9 9"><rect x="0.500" y="0.500" width="8" height="8" fill="#fff" stroke="#9ab880"/><path d="M2 4.500h5" stroke="#000"/><path d="M4.500 2v5" stroke="#000"/></svg>
<svg class="a" style="left:32px;top:379px" width="18" height="18" viewBox="0 0 18 18"><path d="M1.500 6.500h5l1 1.500h8v8.500h-14z" fill="#7aa8e0" stroke="#2a5a98"/><path d="M1.500 16.500l2-6h13l-2 6z" fill="#cfe0f8" stroke="#2a5a98"/><path d="M10.500 1v6M10.500 1h3v3h-3" fill="none" stroke="#2a5a98"/></svg>
<div class="row" style="left:54px;top:159px">FirstWeb</div>
<div class="row" style="left:73px;top:176px">src</div>
<div class="row" style="left:92px;top:193px">com.mikedehill.firstweb</div>
<div class="row" style="left:73px;top:210px">JRE System Library <span style="color:#a09060">[JavaSE-1.6]</span></div>
<div class="row" style="left:73px;top:227px">JavaEE 6.0 Generic Library</div>
<div class="row" style="left:73px;top:244px">JSTL 1.2.1 Library</div>
<div class="row" style="left:73px;top:261px">build</div>
<div class="row" style="left:73px;top:278px">WebRoot</div>
<div class="row" style="left:92px;top:295px">META-INF</div>
<div class="row" style="left:92px;top:312px">WEB-INF</div>
<div class="row" style="left:111px;top:329px">lib</div>
<div class="row" style="left:107px;top:346px;width:56px;background:#ece9d8;padding-left:4px">web.xml</div>
<div class="row" style="left:92px;top:363px">index.jsp</div>
<div class="row" style="left:54px;top:380px">test</div>
</div></div>


<!-- EDITOR -->
<div class="a panel" style="left:256px;top:109px;width:573px;height:440px"></div>
<div class="a" style="left:258px;top:134px;width:13px;height:394px;background:#ece9d8"></div>
<div class="a" style="left:258px;top:211px;width:13px;height:316px;background:repeating-conic-gradient(#a4a490 0 25%,#ece9d8 0 50%) 0 0/2px 2px"></div>
<div class="a green" style="left:271px;top:134px;width:523px;height:393px"></div>
<div class="a" style="left:310px;top:134px;width:1px;height:393px;background:#e8efd8"></div>
<div class="a" style="left:313px;top:230px;width:481px;height:19px;background:#e8f2fe"></div>

<!-- editor code -->
<div id="code" class="a" style="left:271px;top:134px;width:523px;height:393px;overflow:hidden"><div class="a" style="left:-271px;top:-133px">
<div class="code ln" style="top:135px">1</div><div class="code" style="left:313px;top:135px"><span class="kw">package</span> com.mikedehill.firstweb;</div>
<div class="code ln" style="top:154px">2</div>
<div class="code ln" style="top:173px">3</div><div class="code" style="left:313px;top:173px"><span class="kw">import</span> java.io.IOException;</div>
<div class="a" style="left:583px;top:176px;width:11px;height:13px;border:1px solid #8a9a70"></div>
<div class="code ln" style="top:192px">10</div>
<div class="code ln" style="top:211px">11</div><div class="code" style="left:313px;top:211px"><span class="kw">public</span> <span class="kw">class</span> <span style="text-decoration:underline wavy #d8d040 1px;text-underline-offset:3px">HelloServlet</span> <span class="kw">extends</span> HttpServlet {</div>
<div class="code ln" style="top:230px">12</div>
<div class="code ln" style="top:249px">13</div><div class="code cm" style="left:313px;top:249px">    /**</div>
<div class="code ln" style="top:268px">14</div><div class="code cm" style="left:313px;top:268px">     * Constructor of the object.</div>
<div class="code ln" style="top:287px">15</div><div class="code cm" style="left:313px;top:287px">     */</div>
<div class="code ln" style="top:306px">16</div><div class="code" style="left:313px;top:306px">    <span class="kw">public</span> HelloServlet() {</div>
<div class="code ln" style="top:325px">17</div><div class="code" style="left:313px;top:325px">        <span class="kw">super</span>();</div>
<div class="code ln" style="top:344px">18</div><div class="code" style="left:313px;top:344px">    }</div>
<div class="code ln" style="top:363px">19</div>
<div class="code ln" style="top:382px">20</div><div class="code cm" style="left:313px;top:382px">    /**</div>
<div class="code ln" style="top:401px">21</div><div class="code cm" style="left:313px;top:401px">     * Destruction of the <span style="border-bottom:1px solid #d89a30">servlet</span>. &lt;br&gt;</div>
<div class="code ln" style="top:420px">22</div><div class="code cm" style="left:313px;top:420px">     */</div>
<div class="code ln" style="top:439px">23</div><div class="code" style="left:313px;top:439px">    <span class="kw">public</span> <span class="kw">void</span> destroy() {</div>
<div class="code ln" style="top:458px">24</div><div class="code" style="left:313px;top:458px">        <span class="kw">super</span>.destroy(); <span class="lc">// Just puts "destroy"</span></div>
<div class="code ln" style="top:477px">25</div><div class="code lc" style="left:313px;top:477px">        // Put your code here</div>
<div class="code ln" style="top:496px">26</div><div class="code" style="left:313px;top:496px">    }</div>
<div class="code ln" style="top:515px">27</div>
</div></div>
<div class="a" style="left:310px;top:134px;width:1px;height:393px;background:#e8efd8"></div>
<div class="a sb" style="left:794px;top:134px;width:19px;height:393px"></div>
<div class="a" style="left:813px;top:134px;width:14px;height:393px;background:#ece9d8"></div>
<div class="a sb" style="left:311px;top:528px;width:483px;height:18px"></div>

<svg class="a" style="left:301px;top:178px" width="9" height="9" viewBox="0 0 9 9"><circle cx="4.500" cy="4.500" r="4" fill="#e8f0fb" stroke="#9ab8d8" stroke-width=".8"/><path d="M2.500 4.500h4M4.500 2.500v4" stroke="#2a4a98"/></svg>
<svg class="a" style="left:301px;top:254px" width="9" height="9" viewBox="0 0 9 9"><circle cx="4.500" cy="4.500" r="4" fill="#e8f0fb" stroke="#9ab8d8" stroke-width=".8"/><path d="M2.500 4.500h4" stroke="#7a9ad8"/></svg>
<svg class="a" style="left:301px;top:444px" width="9" height="9" viewBox="0 0 9 9"><circle cx="4.500" cy="4.500" r="4" fill="#e8f0fb" stroke="#9ab8d8" stroke-width=".8"/><path d="M2.500 4.500h4" stroke="#7a9ad8"/></svg>
<svg class="a" style="left:258px;top:212px" width="14" height="16" viewBox="0 0 14 16"><circle cx="5" cy="5" r="3.800" fill="#fbe89a" stroke="#c8a02c"/><path d="M3.500 8.500h3v2h-3z" fill="#c8b878"/><path d="M9.500 6l4 8h-8z" fill="#f5c43a" stroke="#a8780c" stroke-width=".7"/><path d="M9.500 9v3M9.500 12.600v.8" stroke="#000" stroke-width="1"/></svg>
<svg class="a" style="left:260px;top:443px" width="11" height="7" viewBox="0 0 11 7"><path d="M5.500 .8L10.300 6H.7z" fill="#3a9a6a" stroke="#1c6a44" stroke-width=".8"/></svg>
<!-- OUTLINE -->
<div class="a panel" style="left:832px;top:109px;width:184px;height:217px"></div>
<div class="a green" style="left:835px;top:158px;width:178px;height:147px"></div>
<div class="a sb" style="left:835px;top:305px;width:178px;height:20px"></div>

<!-- SPRING -->
<div class="a panel" style="left:832px;top:330px;width:184px;height:219px"></div>
<div class="a green" style="left:835px;top:381px;width:150px;height:19px"></div>
<div class="a green" style="left:835px;top:407px;width:178px;height:139px"></div>

<!-- CONSOLE -->
<div class="a panel" style="left:256px;top:552px;width:760px;height:148px"></div>
<div class="a sb" style="left:259px;top:615px;width:754px;height:84px"></div>
<!-- tabs: package explorer -->
<svg class="a" style="left:8px;top:109px" width="245" height="26" viewBox="0 0 245 26"><path d="M1 24V10a9 9 0 0 1 9-9H150c14 0 18 22.500 36 22.500H244V24z" fill="url(#tabg)"/><path d="M150 .5c14 0 18 23 36 23H245" fill="none" stroke="#b9b7a4"/></svg>
<div class="t" style="left:31px;top:114px">Package Explorer</div>
<svg class="a" style="left:14px;top:113px" width="14" height="16" viewBox="0 0 14 16"><path d="M1.500 1v12M1.500 4h3M1.500 10h3" stroke="#555" fill="none"/><rect x="5" y="1.500" width="6" height="5" fill="#e8c080" stroke="#a0602a"/><rect x="5" y="8.500" width="6" height="5" fill="#e8c080" stroke="#a0602a"/></svg>
<svg class="a cx" style="left:150px;top:115px" width="13" height="13" viewBox="0 0 13 13"><path d="M3 3l7.500 7.500M10.500 3L3 10.500" stroke="#5f8a38" stroke-width="3.400" stroke-linecap="square"/><path d="M3 3l7.500 7.500M10.500 3L3 10.500" stroke="#7fa850" stroke-width="1.600" stroke-linecap="square"/></svg>
<div class="a mn" style="left:218px;top:114px"></div><div class="a mx" style="left:236px;top:114px"></div>
<!-- pkg toolbar icons -->
<svg class="a" style="left:190px;top:139px" width="16" height="16" viewBox="0 0 16 16"><rect x="1.500" y="1.500" width="9" height="9" fill="#eef4fb" stroke="#8aa8cf"/><rect x="4.500" y="4.500" width="9" height="9" fill="#e3eefb" stroke="#5b87c0"/><path d="M6.500 9h5" stroke="#1c3f7c" stroke-width="1.500"/></svg>
<svg class="a" style="left:211px;top:137px" width="18" height="18" viewBox="0 0 18 18"><path d="M6 1L1 5l5 4V6.500h6v-3H6z" fill="#fbe9a8" stroke="#c8901c"/><path d="M12 8l5 4-5 4v-2.500H6v-3h6z" fill="#fbe9a8" stroke="#c8901c"/></svg>
<svg class="a" style="left:236px;top:139px" width="11" height="7" viewBox="0 0 11 7"><path d="M0.500 .5h10L5.500 6z" fill="#8aa860" stroke="#6f8f48" stroke-width=".6"/></svg>

<!-- tabs: editor -->
<svg class="a" style="left:256px;top:109px" width="573" height="26" viewBox="0 0 573 26"><defs><linearGradient id="tg" x1="0" y1="0" x2="0" y2="1"><stop offset="0" stop-color="#f4f3ea"/><stop offset="1" stop-color="#d3d7bd"/></linearGradient></defs><path d="M1 23V10a9 9 0 0 1 9-9H159c13 0 17 22 32 22H1z" fill="url(#tg)"/><path d="M159 .5c13 0 17 23 32 23H573" fill="none" stroke="#b9b7a4"/><path d="M1 23.500H192" stroke="#b9b7a4"/><path d="M377.500 1V23M477.500 1V23" stroke="#b9b7a4"/></svg>
<div class="t" style="left:279px;top:114px;color:#fff">HelloServlet.java</div>
<svg class="a" style="left:261px;top:113px" width="16" height="16" viewBox="0 0 16 16"><path d="M4.500 .5h9v14h-9z" fill="#fff" stroke="#9a8f6a"/><path d="M10 3v7a2 2 0 0 1-3 1.500" fill="none" stroke="#2b4f9c" stroke-width="1.800"/><path d="M4 8l4 7H0z" fill="#f5c43a" stroke="#a8780c" stroke-width=".7"/><path d="M4 10.500v2.500" stroke="#000" stroke-width="1"/></svg>
<svg class="a cx" style="left:406px;top:115px" width="13" height="13" viewBox="0 0 13 13"><path d="M3 3l7.500 7.500M10.500 3L3 10.500" stroke="#5f8a38" stroke-width="3.400" stroke-linecap="square"/><path d="M3 3l7.500 7.500M10.500 3L3 10.500" stroke="#7fa850" stroke-width="1.600" stroke-linecap="square"/></svg>
<svg class="a globe" style="left:444px;top:114px" width="15" height="15" viewBox="0 0 15 15"><circle cx="7.500" cy="7.500" r="6.500" fill="#3b78c4" stroke="#24508c"/><path d="M4 4c2-2 5-1 5 1s-3 2-2 4 3 1 3 3-4 2-5 0-2-3-2-5z" fill="#7cc060"/><ellipse cx="5.500" cy="4.500" rx="2.500" ry="1.500" fill="#fff" opacity=".55"/></svg>
<div class="t" style="left:461px;top:114px">MyEclipse Web Browser</div>
<svg class="a" style="left:641px;top:112px" width="17" height="17" viewBox="0 0 17 17"><path d="M2.500 4.500h7l3 3v8h-10z" fill="#f4f7fb" stroke="#8c9cb4"/><circle cx="12" cy="5" r="4" fill="#5b8fcf" stroke="#2f5f9c"/><path d="M10 3c1-1 3 0 3 1s-2 1-1 2 2 1 1 2-3 0-3-2z" fill="#8fd070"/></svg>
<div class="t" style="left:659px;top:114px">web.xml</div>
<div class="a mn" style="left:794px;top:114px"></div><div class="a mx" style="left:812px;top:114px"></div>

<!-- tabs: outline -->
<svg class="a" style="left:832px;top:109px" width="184" height="26" viewBox="0 0 184 26"><path d="M1 24V10a9 9 0 0 1 9-9H90c12 0 16 22.500 34 22.500H184V24z" fill="url(#tabg)"/><path d="M90 .5c12 0 16 23 34 23H185" fill="none" stroke="#b9b7a4"/></svg>
<svg class="a" style="left:837px;top:113px" width="15" height="15" viewBox="0 0 15 15"><rect x="1.500" y="1.500" width="4" height="4" fill="#fff" stroke="#2f6fbf"/><rect x="1.500" y="9.500" width="4" height="4" fill="#fff" stroke="#2f6fbf"/><path d="M8 2.500h6M8 5.500h4M8 10.500h6M8 13h4" stroke="#2f6fbf" stroke-width="1.200"/></svg>
<div class="t" style="left:855px;top:114px">Outline</div>
<svg class="a cx" style="left:911px;top:115px" width="13" height="13" viewBox="0 0 13 13"><path d="M3 3l7.500 7.500M10.500 3L3 10.500" stroke="#5f8a38" stroke-width="3.400" stroke-linecap="square"/><path d="M3 3l7.500 7.500M10.500 3L3 10.500" stroke="#7fa850" stroke-width="1.600" stroke-linecap="square"/></svg>
<div class="a mn" style="left:981px;top:114px"></div><div class="a mx" style="left:999px;top:114px"></div>

<!-- tabs: spring -->
<svg class="a" style="left:832px;top:330px" width="184" height="26" viewBox="0 0 184 26"><path d="M1 24V10a9 9 0 0 1 9-9H111c12 0 14 22.500 30 22.500H184V24z" fill="url(#tabg)"/><path d="M111 .5c12 0 14 23 30 23H185" fill="none" stroke="#b9b7a4"/></svg>
<svg class="a" style="left:836px;top:335px" width="17" height="14" viewBox="0 0 17 14"><path d="M2 12C1 5 8 1 16 1c0 7-5 11-11 9z" fill="#9cc84c" stroke="#6f9a2c" stroke-width=".8"/><path d="M1 13c3-4 7-7 12-9" stroke="#c8a040" fill="none"/></svg>
<div class="t" style="left:856px;top:336px">Spring Ex</div>
<svg class="a cx" style="left:930px;top:337px" width="13" height="13" viewBox="0 0 13 13"><path d="M3 3l7.500 7.500M10.500 3L3 10.500" stroke="#5f8a38" stroke-width="3.400" stroke-linecap="square"/><path d="M3 3l7.500 7.500M10.500 3L3 10.500" stroke="#7fa850" stroke-width="1.600" stroke-linecap="square"/></svg>
<div class="a mn" style="left:981px;top:335px"></div><div class="a mx" style="left:999px;top:335px"></div>
<div class="t" style="left:838px;top:383px">type filter text</div>

<!-- tabs: console -->
<svg class="a" style="left:256px;top:552px" width="760" height="26" viewBox="0 0 760 26"><path d="M412 23V1H500c14 0 18 22 40 22z" fill="url(#tabg)"/><path d="M500 .5c14 0 18 23 40 23H761M0 23.500H412" fill="none" stroke="#b9b7a4"/><path d="M84.500 1V23M161.500 1V23M265.500 1V23M411.500 1V23" stroke="#b9b7a4"/></svg>
<div class="t" style="left:279px;top:557px">Problems</div>
<div class="t" style="left:347px;top:557px;color:#2f5fa8">@</div>
<div class="t" style="left:363px;top:557px">Javadoc</div>
<div class="t" style="left:440px;top:557px">Declaration</div>
<div class="t" style="left:545px;top:557px">Project Migration</div>
<div class="t" style="left:692px;top:557px">Console</div>
<svg class="a cx" style="left:748px;top:558px" width="13" height="13" viewBox="0 0 13 13"><path d="M3 3l7.500 7.500M10.500 3L3 10.500" stroke="#5f8a38" stroke-width="3.400" stroke-linecap="square"/><path d="M3 3l7.500 7.500M10.500 3L3 10.500" stroke="#7fa850" stroke-width="1.600" stroke-linecap="square"/></svg>
<div class="a mn" style="left:981px;top:557px"></div><div class="a mx" style="left:999px;top:557px"></div>
<div class="t" style="left:259px;top:577px">tomcat7Server [Remote Java Application] D:\Program Files\MyEclipse\binary\com.sun.java.jdk.win32.x86_1.6.0.u</div>
<!-- editor scrollbars -->
<div class="a sbbtn" style="left:795px;top:135px"><svg width="15" height="15" viewBox="0 0 15 15"><path d="M3.500 9.500l4-4 4 4" fill="none" stroke="#fff" stroke-width="2"/></svg></div>
<div class="a thumbv" style="left:795px;top:154px;width:17px;height:74px"></div>
<div class="a grip" style="left:800px;top:187px;width:7px;height:7px;background:repeating-linear-gradient(#e6eed4 0 1px,transparent 1px 2px)"></div>
<div class="a sbbtn" style="left:795px;top:508px"><svg width="15" height="15" viewBox="0 0 15 15"><path d="M3.500 5.500l4 4 4-4" fill="none" stroke="#fff" stroke-width="2"/></svg></div>
<div class="a" style="left:816px;top:140px;width:8px;height:8px;background:#f1c232;border:1px solid #e8d48a"></div>
<div class="a" style="left:816px;top:166px;width:9px;height:5px;background:#fdf0a8;border:1px solid #e8c850"></div>
<div class="a sbbtn" style="left:313px;top:529px"><svg width="15" height="15" viewBox="0 0 15 15"><path d="M9.500 3.500l-4 4 4 4" fill="none" stroke="#fff" stroke-width="2"/></svg></div>
<div class="a thumb" style="left:331px;top:529px;width:239px;height:17px"></div>
<div class="a grip" style="left:445px;top:534px;width:7px;height:7px;background:repeating-linear-gradient(90deg,#e6eed4 0 1px,transparent 1px 2px)"></div>
<div class="a sbbtn" style="left:776px;top:529px"><svg width="15" height="15" viewBox="0 0 15 15"><path d="M5.500 3.500l4 4-4 4" fill="none" stroke="#fff" stroke-width="2"/></svg></div>
<!-- pkg scrollbar chevrons -->
<div class="a" style="left:13px;top:680px"><svg width="15" height="15" viewBox="0 0 15 15"><path d="M9.500 3.500l-4 4 4 4" fill="none" stroke="#fff" stroke-width="2"/></svg></div>
<div class="a" style="left:233px;top:680px"><svg width="15" height="15" viewBox="0 0 15 15"><path d="M5.500 3.500l4 4-4 4" fill="none" stroke="#fff" stroke-width="2"/></svg></div>
<div class="a grip" style="left:72px;top:684px;width:7px;height:7px;background:repeating-linear-gradient(90deg,#e6eed4 0 1px,transparent 1px 2px)"></div>
<!-- outline scrollbar -->
<div class="a sbbtn" style="left:836px;top:306px"><svg width="15" height="15" viewBox="0 0 15 15"><path d="M9.500 3.500l-4 4 4 4" fill="none" stroke="#fff" stroke-width="2"/></svg></div>
<div class="a thumb" style="left:855px;top:306px;width:53px;height:17px"></div>
<div class="a grip" style="left:877px;top:311px;width:7px;height:7px;background:repeating-linear-gradient(90deg,#e6eed4 0 1px,transparent 1px 2px)"></div>
<div class="a sbbtn" style="left:995px;top:306px"><svg width="15" height="15" viewBox="0 0 15 15"><path d="M5.500 3.500l4 4-4 4" fill="none" stroke="#fff" stroke-width="2"/></svg></div>
<!-- console scrollbars -->
<div class="a sbbtn" style="left:995px;top:616px"><svg width="15" height="15" viewBox="0 0 15 15"><path d="M3.500 9.500l4-4 4 4" fill="none" stroke="#fff" stroke-width="2"/></svg></div>
<div class="a thumbv" style="left:995px;top:640px;width:17px;height:10px"></div>
<div class="a sbbtn" style="left:995px;top:659px"><svg width="15" height="15" viewBox="0 0 15 15"><path d="M3.500 5.500l4 4 4-4" fill="none" stroke="#fff" stroke-width="2"/></svg></div>
<div class="a sbbtn" style="left:259px;top:680px"><svg width="15" height="15" viewBox="0 0 15 15"><path d="M9.500 3.500l-4 4 4 4" fill="none" stroke="#fff" stroke-width="2"/></svg></div>
<div class="a thumb" style="left:279px;top:680px;width:316px;height:17px"></div>
<div class="a grip" style="left:433px;top:685px;width:7px;height:7px;background:repeating-linear-gradient(90deg,#e6eed4 0 1px,transparent 1px 2px)"></div>
<div class="a sbbtn" style="left:976px;top:680px"><svg width="15" height="15" viewBox="0 0 15 15"><path d="M5.500 3.500l4 4-4 4" fill="none" stroke="#fff" stroke-width="2"/></svg></div>
<div id="con" class="a" style="left:259px;top:615px;width:737px;height:65px;overflow:hidden;background:#fff"><div class="a" style="left:-259px;top:-615px">
<div class="con" style="top:614px;width:308px"><span class="cj">信息</span>: Starting service Catalina</div>
<div class="con" style="top:633px;width:726px">2013-7-11 16:53:59 org.apache.catalina.core.StandardEngine startInternal</div>
<div class="con" style="top:652px;width:508px"><span class="cj">信息</span>: Starting Servlet Engine: Apache Tomcat/7.0.40</div>
<div class="con" style="top:671px;width:736px">2013-7-11 16:54:01 org.apache.catalina.startup.HostConfig deployDirectory</div>
</div></div>
<!-- outline toolbar -->
<svg class="a" style="left:860px;top:139px" width="16" height="16" viewBox="0 0 16 16"><rect x="1.500" y="1.500" width="9" height="9" fill="#eef4fb" stroke="#8aa8cf"/><rect x="4.500" y="4.500" width="9" height="9" fill="#e3eefb" stroke="#5b87c0"/><path d="M6.500 9h5" stroke="#1c3f7c" stroke-width="1.500"/></svg>
<svg class="a" style="left:881px;top:137px" width="18" height="18" viewBox="0 0 18 18"><path d="M2.500 3v11M0.500 11.500l2 3 2-3" fill="none" stroke="#444" stroke-width="1"/><text x="6" y="8" font-family="Liberation Sans,sans-serif" font-weight="bold" font-size="11.500" fill="#1c8a6a" letter-spacing="0">a</text><text x="10" y="17.500" font-family="Liberation Sans,sans-serif" font-weight="bold" font-size="11.500" fill="#b03aa8" letter-spacing="0">z</text></svg>
<svg class="a" style="left:905px;top:138px" width="17" height="17" viewBox="0 0 17 17"><circle cx="9" cy="9" r="5.500" fill="#5f9fe0" stroke="#2f6fbf"/><path d="M7 7c2-1 4 0 3 2s-2 2-3 1z" fill="#dff"/><path d="M2 2l13 13" stroke="#1c2f6c" stroke-width="1.600"/></svg>
<svg class="a" style="left:928px;top:137px" width="17" height="18" viewBox="0 0 17 18"><circle cx="7" cy="11" r="4" fill="#9aa4b8" stroke="#6a7488"/><path d="M1 5l12 12" stroke="#1c2f6c" stroke-width="1.600"/><text x="11" y="7" font-family="Liberation Sans,sans-serif" font-weight="bold" font-size="8" fill="#3a5aa8" letter-spacing="0">S</text></svg>
<svg class="a" style="left:952px;top:140px" width="12" height="12" viewBox="0 0 12 12"><circle cx="6" cy="6" r="4.500" fill="#7fc07a" stroke="#4f8f4a"/></svg>
<svg class="a" style="left:974px;top:137px" width="17" height="18" viewBox="0 0 17 18"><circle cx="7" cy="11" r="4" fill="#9aa4b8" stroke="#6a7488"/><path d="M1 5l12 12" stroke="#1c2f6c" stroke-width="1.600"/><text x="11" y="7" font-family="Liberation Sans,sans-serif" font-weight="bold" font-size="8" fill="#3a5aa8" letter-spacing="0">L</text></svg>
<svg class="a" style="left:998px;top:139px" width="11" height="7" viewBox="0 0 11 7"><path d="M0.500 .5h10L5.500 6z" fill="#8aa860" stroke="#6f8f48" stroke-width=".6"/></svg>
<!-- outline tree -->
<div id="otree" class="a" style="left:835px;top:158px;width:178px;height:147px;overflow:hidden"><div class="a" style="left:-835px;top:-158px">
<svg class="a" style="left:848px;top:166px" width="50" height="106" viewBox="0 0 50 106"><path d="M1.500 2.500h14M1.500 2.500v10M25.500 27v75.500M25.500 36.500h14M25.500 53.500h14M25.500 70.500h14M25.500 87.500h14M25.500 102.500h14" stroke="#8fb860" fill="none" stroke-dasharray="1 1"/></svg>
<svg class="a" style="left:865px;top:161px" width="14" height="14" viewBox="0 0 14 14"><rect x="1" y="1" width="12" height="12" fill="#c8a078" opacity=".6"/><path d="M1 5h12M1 9.500h12M5 1v12M9.500 1v12" stroke="#e8dcc8" stroke-width="1.500"/><rect x="1.500" y="1.500" width="11" height="11" fill="none" stroke="#9a7a58" stroke-width=".8"/></svg>
<div class="row" style="left:890px;top:159px">com.mikedehill.firstweb</div>
<div class="a" style="left:845px;top:180px;width:9px;height:9px;background:#fff;border:1px solid #9ab880"></div><div class="a" style="left:847px;top:184px;width:5px;height:1px;background:#000"></div>
<svg class="a" style="left:862px;top:176px" width="18" height="18" viewBox="0 0 18 18"><circle cx="10.500" cy="7.500" r="6.500" fill="#3f9f4a" stroke="#2a7a34"/><path d="M13.500 5.200a3.500 3.500 0 1 0 0 4.600" fill="none" stroke="#fff" stroke-width="2"/><path d="M4.500 9l4.500 8H0z" fill="#f5c43a" stroke="#a8780c" stroke-width=".7"/><path d="M4.500 11.500v3M4.500 15.200v1" stroke="#000" stroke-width="1"/></svg>
<div class="row" style="left:888px;top:176px;width:91px;background:#ece9d8;padding-left:2px">HelloServlet</div>
<svg class="a" style="left:891px;top:193px" width="22" height="17" viewBox="0 0 22 17"><circle cx="5" cy="9" r="4" fill="#7fc07a" stroke="#4f8f4a"/><text x="12" y="7" font-family="Liberation Sans,sans-serif" font-weight="bold" font-size="7" fill="#dff0d0" letter-spacing="0">C</text></svg>
<div class="row" style="left:915px;top:193px">HelloServlet()</div>
<svg class="a mi" style="left:891px;top:210px" width="22" height="17" viewBox="0 0 22 17"><circle cx="5" cy="9" r="4" fill="#7fc07a" stroke="#4f8f4a"/><path d="M12 14.500l4-5 4 5z" fill="#7f9fd8" stroke="#e8eefa" stroke-width=".8"/></svg>
<div class="row" style="left:915px;top:210px">destroy() <span style="color:#8f9a48">: void</span></div>
<svg class="a mi" style="left:891px;top:227px" width="22" height="17" viewBox="0 0 22 17"><circle cx="5" cy="9" r="4" fill="#7fc07a" stroke="#4f8f4a"/><path d="M12 14.500l4-5 4 5z" fill="#7f9fd8" stroke="#e8eefa" stroke-width=".8"/></svg>
<div class="row" style="left:915px;top:227px">doGet(HttpServletRequest, HttpServletResponse)</div>
<svg class="a mi" style="left:891px;top:244px" width="22" height="17" viewBox="0 0 22 17"><circle cx="5" cy="9" r="4" fill="#7fc07a" stroke="#4f8f4a"/><path d="M12 14.500l4-5 4 5z" fill="#7f9fd8" stroke="#e8eefa" stroke-width=".8"/></svg>
<div class="row" style="left:915px;top:244px">doPost(HttpServletRequest, HttpServletResponse)</div>
<svg class="a mi" style="left:891px;top:261px" width="22" height="17" viewBox="0 0 22 17"><circle cx="5" cy="9" r="4" fill="#7fc07a" stroke="#4f8f4a"/><path d="M12 14.500l4-5 4 5z" fill="#7f9fd8" stroke="#e8eefa" stroke-width=".8"/></svg>
<div class="row" style="left:915px;top:261px">init() <span style="color:#8f9a48">: void</span></div>
</div></div>
<!-- spring toolbar -->
<svg class="a" style="left:921px;top:360px" width="16" height="16" viewBox="0 0 16 16"><rect x="1.500" y="1.500" width="9" height="9" fill="#eef4fb" stroke="#8aa8cf"/><rect x="4.500" y="4.500" width="9" height="9" fill="#e3eefb" stroke="#5b87c0"/><path d="M6.500 9h5" stroke="#1c3f7c" stroke-width="1.500"/></svg>
<svg class="a" style="left:942px;top:358px" width="18" height="18" viewBox="0 0 18 18"><path d="M6 1L1 5l5 4V6.500h6v-3H6z" fill="#fbe9a8" stroke="#c8901c"/><path d="M12 8l5 4-5 4v-2.500H6v-3h6z" fill="#fbe9a8" stroke="#c8901c"/></svg>
<div class="a" style="left:966px;top:359px;width:1px;height:17px;background:#c8c5b0"></div>
<svg class="a" style="left:973px;top:358px" width="18" height="18" viewBox="0 0 18 18"><path d="M2.500 3v11M0.500 11.500l2 3 2-3" fill="none" stroke="#444" stroke-width="1"/><text x="6" y="8" font-family="Liberation Sans,sans-serif" font-weight="bold" font-size="11.500" fill="#1c8a6a" letter-spacing="0">a</text><text x="10" y="17.500" font-family="Liberation Sans,sans-serif" font-weight="bold" font-size="11.500" fill="#b03aa8" letter-spacing="0">z</text></svg>
<svg class="a" style="left:998px;top:360px" width="11" height="7" viewBox="0 0 11 7"><path d="M0.500 .5h10L5.500 6z" fill="#8aa860" stroke="#6f8f48" stroke-width=".6"/></svg>
<!-- console tab icons -->
<svg class="a" style="left:260px;top:556px" width="17" height="17" viewBox="0 0 17 17"><rect x="2.500" y="1.500" width="12" height="9" fill="#fff" stroke="#8a8a9a"/><circle cx="6" cy="5" r="2.500" fill="#d82a2a"/><path d="M3 15l3-5 3 5z" fill="#f5c43a" stroke="#a8780c" stroke-width=".7"/><path d="M10 12.500h5M10 15h5" stroke="#5a6a9a"/></svg>
<svg class="a" style="left:422px;top:556px" width="17" height="17" viewBox="0 0 17 17"><path d="M2.500 1.500h8l3 3v11h-11z" fill="#fffbe8" stroke="#8a8a6a"/><circle cx="7" cy="7" r="3" fill="none" stroke="#4a6ab8"/><path d="M7 11h7M11.500 8.500l3 2.500-3 2.500" stroke="#d89a1c" stroke-width="1.500" fill="none"/></svg>
<svg class="a" style="left:526px;top:557px" width="18" height="16" viewBox="0 0 18 16"><path d="M1.500 2.500h5l1.500 1.500h8v9.500h-14.500z" fill="#f2c860" stroke="#a8782c"/><path d="M1.500 13.500l2.500-6h13l-2.500 6z" fill="#fbe8a8" stroke="#a8782c"/><path d="M2 10h5l-1-2" stroke="#c82a2a" stroke-width="1.500" fill="none"/><path d="M9 13h6M13 11l2.500 2-2.500 2" stroke="#2a9a2a" stroke-width="1.500" fill="none"/></svg>
<svg class="a" style="left:674px;top:556px" width="16" height="16" viewBox="0 0 16 16"><rect x="1.500" y="1.500" width="13" height="10" fill="#fff" stroke="#2a4a98" stroke-width="1.500"/><rect x="3" y="3" width="10" height="3" fill="#5a8ad8"/><path d="M5 14.500h6M8 11.500v3" stroke="#2a4a98" stroke-width="1.500"/></svg>
<!-- console toolbar -->
<svg class="a" style="left:741px;top:596px" width="13" height="13" viewBox="0 0 13 13"><rect x="1" y="1" width="11" height="11" fill="#e82a2a" stroke="#a81c1c"/><rect x="2.500" y="2.500" width="8" height="8" fill="#f04a4a" stroke="#f88" stroke-width=".7"/></svg>
<svg class="a" style="left:764px;top:596px" width="14" height="13" viewBox="0 0 14 13"><path d="M2 2l10 9M12 2L2 11" stroke="#aeaca0" stroke-width="3"/></svg>
<svg class="a" style="left:786px;top:594px" width="17" height="16" viewBox="0 0 17 16"><path d="M1 1l8 8M9 1L1 9" stroke="#aeaca0" stroke-width="2.500"/><path d="M7 6l9 9M16 6l-9 9" stroke="#aeaca0" stroke-width="2.500"/></svg>
<div class="a" style="left:811px;top:594px;width:1px;height:17px;background:#c8c5b0"></div>
<svg class="a" style="left:817px;top:594px" width="17" height="17" viewBox="0 0 17 17"><path d="M1.500 1.500h7l3 3v10h-10z" fill="#f4f7fb" stroke="#6a7a9a"/><path d="M3.500 5h5M3.500 7.500h6M3.500 10h4" stroke="#6a7a9a"/><path d="M8 9l7 7M15 9l-7 7" stroke="#333" stroke-width="2"/></svg>
<svg class="a" style="left:839px;top:594px" width="17" height="17" viewBox="0 0 17 17"><rect x="9.500" y="1.500" width="6" height="14" fill="#f4f7fb" stroke="#3a4a6a"/><path d="M11 4h3M11 7h3M11 10h3" stroke="#3a4a6a"/><rect x="1.500" y="8.500" width="8" height="7" rx="1" fill="#f2c040" stroke="#8a6a1c"/><path d="M3.500 8.500v-3a2 2 0 0 1 4 0v3" fill="none" stroke="#8a6a1c" stroke-width="1.300"/></svg>
<div class="a" style="left:861px;top:591px;width:23px;height:23px;border:1px solid #9fb0c8;border-radius:3px;background:#fff"></div>
<svg class="a" style="left:864px;top:594px" width="17" height="17" viewBox="0 0 17 17"><rect x="5.500" y="1.500" width="10" height="8" fill="#eaf0fb" stroke="#4a6aa8"/><path d="M7.500 4h6M7.500 6.500h6" stroke="#4a6aa8"/><rect x="1.500" y="7.500" width="8" height="6" fill="#fff" stroke="#2a4a88"/><path d="M3 15.500h5M5.500 13.500v2" stroke="#2a4a88"/></svg>
<div class="a" style="left:885px;top:591px;width:23px;height:23px;border:1px solid #9fb0c8;border-radius:3px;background:#fff"></div>
<svg class="a" style="left:888px;top:594px" width="17" height="17" viewBox="0 0 17 17"><rect x="5.500" y="1.500" width="10" height="8" fill="#fbeaea" stroke="#4a6aa8"/><path d="M8 3l5 5M13 3l-5 5" stroke="#d82a2a" stroke-width="1.500"/><rect x="1.500" y="7.500" width="8" height="6" fill="#fff" stroke="#2a4a88"/><path d="M3 15.500h5M5.500 13.500v2" stroke="#2a4a88"/></svg>
<div class="a" style="left:911px;top:594px;width:1px;height:17px;background:#c8c5b0"></div>
<svg class="a" style="left:917px;top:594px" width="17" height="17" viewBox="0 0 17 17"><rect x="1.500" y="6.500" width="11" height="9" fill="#fff" stroke="#2a4a98"/><rect x="1.500" y="6.500" width="11" height="2.500" fill="#5a8ad8"/><path d="M8 9l4-4M10 2l5 5M11.500 3.500l2-2 2 2-2 2" stroke="#2a8a4a" stroke-width="1.500" fill="none"/></svg>
<svg class="a" style="left:940px;top:595px" width="17" height="16" viewBox="0 0 17 16"><rect x="2.500" y="1.500" width="12" height="9" fill="#dcdad0" stroke="#aeaca0"/><rect x="4.500" y="3.500" width="8" height="5" fill="#c4c2b4"/><path d="M5 14.500h7M8.500 10.500v4" stroke="#aeaca0" stroke-width="1.500"/></svg>
<svg class="a" style="left:964px;top:601px" width="7" height="4" viewBox="0 0 7 4"><path d="M0 0h7L3.500 4z" fill="#b8b5a4"/></svg>
<svg class="a" style="left:979px;top:593px" width="18" height="18" viewBox="0 0 18 18"><rect x="1.500" y="4.500" width="12" height="11" fill="#fdf6d8" stroke="#5a6fa8"/><rect x="1.500" y="4.500" width="12" height="3" fill="#5a8ad8"/><path d="M13 .5l1.300 2.400 2.400 1.300-2.400 1.300L13 7.900l-1.300-2.400-2.400-1.300 2.400-1.300z" fill="#fbe36a" stroke="#b8901c" stroke-width=".7"/></svg>
<svg class="a" style="left:1001px;top:601px" width="7" height="4" viewBox="0 0 7 4"><path d="M0 0h7L3.500 4z" fill="#000"/></svg>
<!--/PANELS-->
<!--DIALOG-->
<div class="a" style="left:212px;top:275px;width:602px;height:138px;background:#6f8548;border-radius:7px 7px 0 0"></div>
<div class="a" style="left:213px;top:276px;width:600px;height:136px;background:#a3b37e;border-radius:6px 6px 0 0"></div>
<div class="a" style="left:213px;top:275px;width:600px;height:31px;border-radius:7px 7px 0 0;background:linear-gradient(#dfe6c6 0,#c3cea2 3px,#b3c08f 8px,#a3b27c 20px,#94a56b 28px,#8b9c63 31px)"></div>
<div class="a" style="left:215px;top:306px;width:596px;height:105px;background:#ece9d8"></div>
<svg class="a" style="left:217px;top:283px" width="17" height="17" viewBox="0 0 16 16"><rect x="0.500" y="0.500" width="15" height="15" rx="3" fill="#1f3f7a" stroke="#4a6aa0" stroke-width=".6"/><text x="3.500" y="13.500" font-family="Liberation Serif,serif" font-style="italic" font-size="16" fill="#fff" letter-spacing="0">8</text></svg>
<div class="t" style="left:237px;top:281px;height:24px;line-height:24px;font-size:18px;font-weight:bold;letter-spacing:0.2px;color:#fff;text-shadow:1px 1px 0 #4f5f30">MyEclipse Server Application</div>
<div class="a" style="left:783px;top:279px;width:25px;height:24px;border:1px solid #fff;border-radius:4px;background:linear-gradient(135deg,#e0826a,#c4502f 60%,#b84426)"></div>
<svg class="a" style="left:788px;top:284px" width="15" height="14" viewBox="0 0 15 14"><path d="M2 1.500l11 11M13 1.500l-11 11" stroke="#fff" stroke-width="2.800" stroke-linecap="round"/></svg>
<svg class="a" style="left:226px;top:318px" width="33" height="33" viewBox="0 0 33 33"><defs><radialGradient id="eg" cx=".38" cy=".3" r=".75"><stop offset="0" stop-color="#ff6a5a"/><stop offset=".45" stop-color="#e81410"/><stop offset="1" stop-color="#8c0404"/></radialGradient></defs><circle cx="16.500" cy="16.500" r="15.500" fill="url(#eg)" stroke="#7a1a14" stroke-width=".8"/><path d="M10.500 10.500l12 12M22.500 10.500l-12 12" stroke="#fff" stroke-width="4" stroke-linecap="round"/></svg>
<div class="t" style="left:273px;top:317px">The server is not specified</div>
<div class="a" style="left:692px;top:378px;width:105px;height:21px;border:1px solid #4f6a2c;border-radius:3px;background:linear-gradient(#fff,#f3f1e4 80%,#e0dcc8);box-shadow:inset 0 0 0 1px #a8c070"></div>
<div class="a" style="left:695px;top:381px;width:99px;height:15px;border:1px dotted #333"></div>
<div class="t" style="left:736px;top:380px">OK</div>
<!--/DIALOG-->
<!--STATUS-->
<div class="a" style="left:4px;top:700px;width:1016px;height:29px;background:#ece9d8"></div>
<div class="a" style="left:10px;top:706px;width:2px;height:17px;background:repeating-linear-gradient(#b0ae9c 0 2px,transparent 2px 4px)"></div>
<svg class="a" style="left:22px;top:705px" width="16" height="16" viewBox="0 0 16 16"><rect x="1.500" y="3.500" width="5" height="10" fill="#fff" stroke="#5f7fbf"/><rect x="1.500" y="3.500" width="5" height="2" fill="#5f7fbf"/><path d="M11 1l1.200 2.300L14.500 4.500 12.200 5.700 11 8 9.800 5.700 7.500 4.500 9.800 3.300z" fill="#fbe36a" stroke="#b8901c" stroke-width=".7"/></svg>
<div class="a" style="left:348px;top:703px;width:1px;height:23px;background:#c5c2ae;border-right:1px solid #fff;width:2px"></div>
<div class="a" style="left:468px;top:703px;width:2px;height:23px;background:#c5c2ae;border-right:1px solid #fff"></div>
<div class="a" style="left:580px;top:703px;width:2px;height:23px;background:#c5c2ae;border-right:1px solid #fff"></div>
<div class="a" style="left:696px;top:706px;width:2px;height:17px;background:repeating-linear-gradient(#b0ae9c 0 2px,transparent 2px 4px)"></div>
<div class="t" style="left:357px;top:707px">Writable</div>
<div class="t" style="left:476px;top:707px">Smart Insert</div>
<div class="t" style="left:589px;top:707px">12 : 1</div>
<!--/STATUS-->
<!--TASKBAR-->
<div class="a" style="left:0;top:735px;width:1024px;height:33px;background:linear-gradient(#dae4bc 0,#c8d5a6 2px,#b6c690 4px,#c2d09e 5px,#b3c38d 9px,#abbc84 18px,#a6b87e 27px,#9aac70 33px)"></div>
<div class="a" style="left:921px;top:737px;width:103px;height:31px;background:linear-gradient(#dfe0b4 0,#f4eec8 3px,#f0e6b6 14px,#eadfa8 24px,#dccf96 31px);border-left:1px solid #a89c6a"></div>
<!-- start -->
<div class="a" style="left:0;top:738px;width:106px;height:30px;border-radius:0 12px 12px 0/0 15px 15px 0;background:linear-gradient(#9cbc8c 0,#78a46a 2px,#6a9a5e 8px,#5c8e54 16px,#4f8249 24px,#44763f 30px);box-shadow:inset -2px 0 3px #3a6634,inset 0 1px 1px #b8d0a0"></div>
<svg class="a" style="left:9px;top:741px" width="22" height="22" viewBox="0 0 22 22"><path d="M2 4c3-1.500 5-1.500 8 0l-1.500 6c-3-1.500-5-1.500-8 0z" fill="#e8602c"/><path d="M11.500 4.500c3 1.500 5 1.500 8 0L18 10.500c-3 1.500-5 1.500-8 0z" fill="#7fc04a"/><path d="M0 11.500c3-1.500 5-1.500 8 0l-1.500 6c-3-1.500-5-1.500-8 0z" fill="#4a8ae0"/><path d="M9.500 12c3 1.500 5 1.500 8 0L16 18c-3 1.500-5 1.500-8 0z" fill="#f5c832"/></svg>
<div class="t" style="left:38px;top:739px;height:28px;line-height:28px;font-family:'Noto Sans CJK SC',sans-serif;font-size:23px;font-style:italic;letter-spacing:-1px;color:#fff;font-weight:300;transform:skewX(-12deg)">开始</div>
<!-- quick launch -->
<div class="a" style="left:117px;top:743px;width:3px;height:20px;background:repeating-linear-gradient(#e8eed8 0 2px,transparent 2px 4px);opacity:.8"></div>
<svg class="a" style="left:128px;top:745px" width="17" height="17" viewBox="0 0 17 17"><circle cx="8.500" cy="8.500" r="7.500" fill="#f0f0f0" stroke="#2a5aa8" stroke-width="1.500"/><path d="M8.500 1a7.500 7.500 0 0 1 7.500 7.500H8.500z" fill="#e8792c"/><path d="M1 8.500a7.500 7.500 0 0 0 7.500 7.500V8.500z" fill="#d8a020"/><circle cx="8.500" cy="8.500" r="4" fill="#fff"/><path d="M7 6v5l4-2.500z" fill="#222"/></svg>
<svg class="a" style="left:151px;top:745px" width="17" height="17" viewBox="0 0 17 17"><circle cx="8.500" cy="8.500" r="7.500" fill="#2a6ac8" stroke="#e8f0ff" stroke-width="1"/><path d="M11.500 4.500C7 3 5 7 8.500 8.500S10 14 5 12.500" fill="none" stroke="#fff" stroke-width="2.200"/></svg>
<svg class="a" style="left:173px;top:745px" width="18" height="17" viewBox="0 0 18 17"><rect x="1" y="2" width="14" height="13" rx="3" fill="#3a7ad0" stroke="#1c4a98"/><rect x="4" y="5" width="8" height="8" fill="#fff"/><path d="M6 11l2-5 3 3z" fill="#3a7ad0"/><circle cx="15" cy="5" r="2" fill="#d84a2a"/></svg>
<div class="t" style="left:203px;top:736px;font-weight:bold;color:#2f3f1c;font-size:12px">»</div>
<div class="a" style="left:220px;top:743px;width:3px;height:20px;background:repeating-linear-gradient(#e8eed8 0 2px,transparent 2px 4px);opacity:.8"></div>
<!-- task buttons -->
<div class="a tb" style="left:231px;width:125px"></div>
<svg class="a" style="left:241px;top:745px" width="16" height="15" viewBox="0 0 16 15"><path d="M1 3.500a1 1 0 0 1 1-1h4l1.500 1.500H14a1 1 0 0 1 1 1V12.500a1 1 0 0 1-1 1H2a1 1 0 0 1-1-1z" fill="#f7d978" stroke="#b8902c"/><path d="M1.500 6h13" stroke="#fff3c0"/></svg>
<div class="t" style="left:260px;top:745px"><b>5</b> Windo...</div>
<svg class="a" style="left:345px;top:751px" width="8" height="5" viewBox="0 0 8 5"><path d="M0 0h8L4 4.500z" fill="#222"/></svg>
<div class="a tb on" style="left:357px;width:127px"></div>
<svg class="a" style="left:367px;top:744px" width="17" height="17" viewBox="0 0 16 16"><rect x="0.500" y="0.500" width="15" height="15" rx="3" fill="#1f3f7a" stroke="#4a6aa0" stroke-width=".6"/><text x="3.500" y="13.500" font-family="Liberation Serif,serif" font-style="italic" font-size="16" fill="#fff" letter-spacing="0">8</text></svg>
<div class="t" style="left:388px;top:745px;color:#fff">Java - F...</div>
<div class="a tb" style="left:486px;width:125px"></div>
<svg class="a" style="left:493px;top:744px" width="17" height="17" viewBox="0 0 17 17"><rect x="0.500" y="0.500" width="16" height="16" rx="2" fill="#3a7ad8" stroke="#1c4a98"/><rect x="3" y="3" width="11" height="11" fill="#fff"/><path d="M3 13c3-1 4-6 8-8l2 2c-4 1-5 6-8 7z" fill="#f0902c"/></svg>
<div class="t" style="left:514px;top:745px">Java.Web...</div>
<div class="a tb" style="left:613px;width:126px"></div>
<svg class="a" style="left:621px;top:744px" width="17" height="17" viewBox="0 0 17 17"><circle cx="8.500" cy="8.500" r="7.500" fill="#2a6ac8" stroke="#e8f0ff" stroke-width="1"/><path d="M11.500 4.500C7 3 5 7 8.500 8.500S10 14 5 12.500" fill="none" stroke="#fff" stroke-width="2.200"/></svg>
<div class="t" style="left:642px;top:745px"><span style="font-size:14px;letter-spacing:0">发表新话</span>...</div>
<div class="a tb" style="left:741px;width:126px"></div>
<svg class="a" style="left:749px;top:743px" width="17" height="18" viewBox="0 0 17 18"><path d="M3 6h11l-1.500 11h-8z" fill="#d8c8a0" stroke="#8a7a4a"/><path d="M5 7L3 1M8 7V0M11 7l2-6" stroke="#c8502c" stroke-width="1.800"/><path d="M6.500 7l-.5-5M10 7l1-5" stroke="#3a7ac8" stroke-width="1.500"/></svg>
<div class="t" style="left:771px;top:745px">1 - <span style="font-size:14px;letter-spacing:0">画图</span></div>
<div class="a" style="left:877px;top:743px;width:3px;height:20px;background:repeating-linear-gradient(#e8eed8 0 2px,transparent 2px 4px);opacity:.8"></div>
<svg class="a" style="left:887px;top:746px" width="18" height="13" viewBox="0 0 18 13"><rect x="0.500" y="2.500" width="17" height="10" rx="1" fill="#fff" stroke="#222"/><path d="M3 5h12M3 7.500h12" stroke="#222" stroke-dasharray="1.500 1"/><path d="M5 10.500h8" stroke="#222"/><path d="M9 2.500V0" stroke="#222"/></svg>
<svg class="a" style="left:913px;top:744px" width="17" height="17" viewBox="0 0 17 17"><circle cx="8.500" cy="8.500" r="7.500" fill="#b8785a" stroke="#8a5238"/><path d="M10.500 4.500l-4 4 4 4" fill="none" stroke="#fff" stroke-width="2"/></svg>
<svg class="a" style="left:933px;top:748px" width="16" height="9" viewBox="0 0 16 9"><path d="M1 6c2-6 4-6 5 0s3 0 4-3 2-1 2 1" fill="none" stroke="#e8701c" stroke-width="2"/><circle cx="13.500" cy="4.500" r="2" fill="#e8701c"/></svg>
<svg class="a" style="left:950px;top:744px" width="15" height="17" viewBox="0 0 15 17"><path d="M7.500 .5l6.500 2v6c0 4-3 6.500-6.500 8C4 15 1 12.500 1 8.500v-6z" fill="#2a7ae0" stroke="#e8f0ff"/><path d="M4 8l3 3 4.500-6" fill="none" stroke="#fff" stroke-width="1.800"/></svg>
<div class="t" style="left:975px;top:745px;color:#4a4418">18:16</div>
<!--/TASKBAR-->
</body>
</html>
